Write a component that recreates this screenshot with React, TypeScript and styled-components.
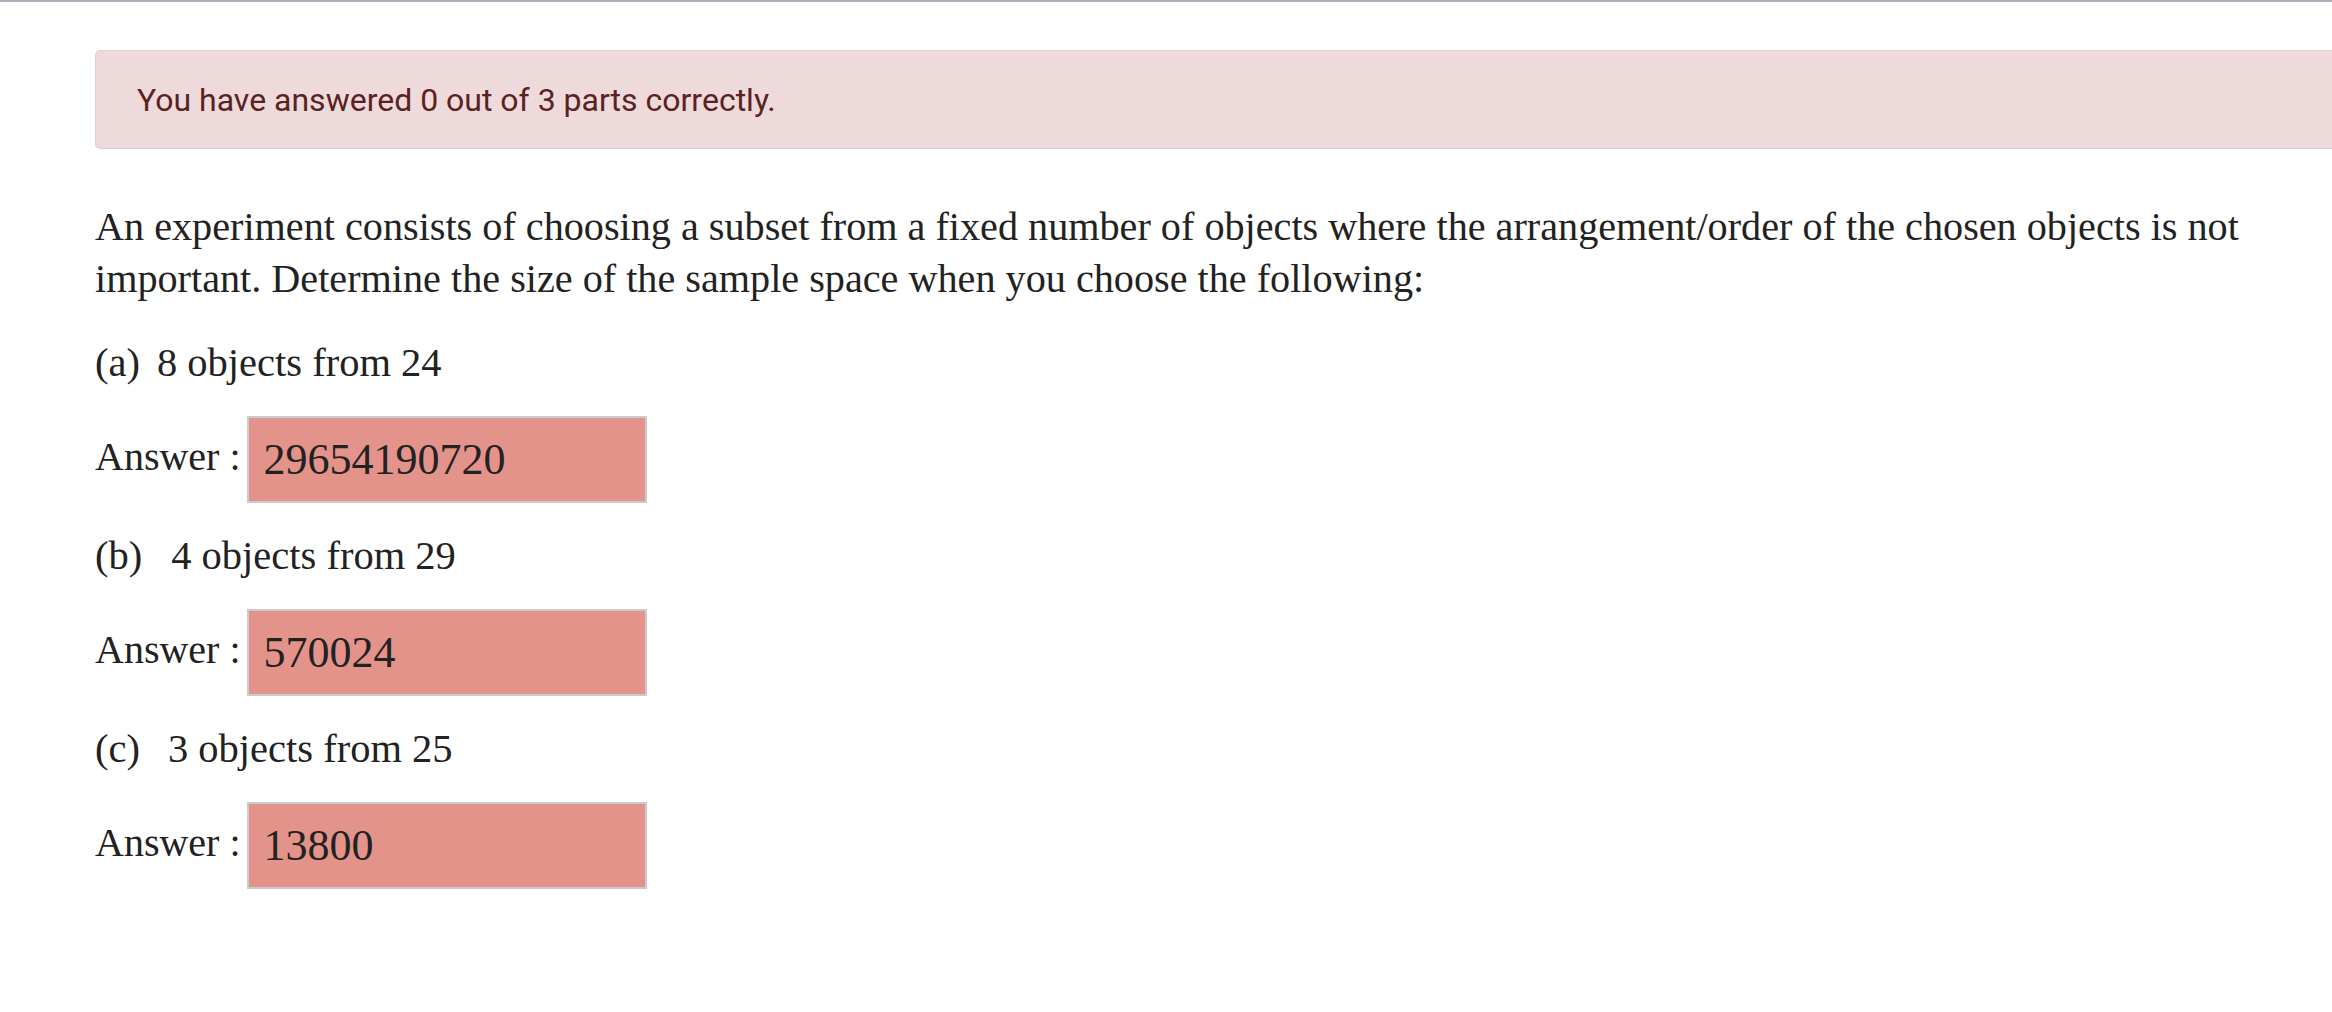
import React from "react";
import styled, { createGlobalStyle } from "styled-components";

const Global = createGlobalStyle`
  html, body {
    margin: 0;
    padding: 0;
    background: #ffffff;
    overflow: hidden;
  }
  body {
    font-family: "Liberation Serif", "Times New Roman", serif;
    color: #222222;
  }
`;

const Page = styled.div`
  width: 2332px;
  min-height: 1012px;
  border-top: 2px solid #aab0bc;
  box-sizing: border-box;
  overflow: hidden;
`;

const Content = styled.div`
  padding: 48px 0 0 95px;
  display: flex;
  flex-direction: column;
`;

const Alert = styled.div`
  width: 2400px;
  box-sizing: border-box;
  background: #eedada;
  border: 1px solid #e8cccc;
  border-bottom-color: #d2d4da;
  border-radius: 5px;
  padding: 31px 41px 30px;
  font-family: Roboto, "Liberation Sans", sans-serif;
  font-size: 32px;
  line-height: 36px;
  color: #5a2222;
`;

const Prose = styled.p`
  margin: 52px 0 32px;
  width: 2175px;
  font-size: 40.2px;
  line-height: 52px;
  color: #222222;
`;

const Parts = styled.div`
  display: flex;
  flex-direction: column;
  gap: 27px;
`;

const Question = styled.div`
  display: flex;
  align-items: baseline;
  font-size: 40.5px;
  line-height: 52px;
  color: #222222;
`;

const PartLabel = styled.span<{ $gap: number }>`
  margin-right: ${(p) => p.$gap}px;
`;

const AnswerRow = styled.div`
  display: flex;
  align-items: center;
  gap: 6px;
`;

const AnswerLabel = styled.span`
  font-size: 40px;
  line-height: 52px;
  color: #222222;
  margin-top: -6px;
`;

const AnswerBox = styled.div`
  width: 400px;
  height: 87px;
  box-sizing: border-box;
  background: #e4938b;
  border: 2px solid #cbcbcb;
  padding: 0 0 0 15px;
  display: flex;
  align-items: center;
  font-family: "Liberation Serif", "Times New Roman", serif;
  font-size: 44px;
  color: #222222;
`;

const parts = [
  { label: "(a)", gap: 17, text: "8 objects from 24", answer: "29654190720" },
  { label: "(b)", gap: 29, text: "4 objects from 29", answer: "570024" },
  { label: "(c)", gap: 28, text: "3 objects from 25", answer: "13800" },
];

export default function App() {
  return (
    <Page>
      <Global />
      <Content>
        <Alert>You have answered 0 out of 3 parts correctly.</Alert>
        <Prose>
          An experiment consists of choosing a subset from a fixed number of objects where the
          arrangement/order of the chosen objects is not important. Determine the size of the
          sample space when you choose the following:
        </Prose>
        <Parts>
          {parts.map((p) => (
            <React.Fragment key={p.label}>
              <Question>
                <PartLabel $gap={p.gap}>{p.label}</PartLabel>
                <span>{p.text}</span>
              </Question>
              <AnswerRow>
                <AnswerLabel>Answer :</AnswerLabel>
                <AnswerBox>{p.answer}</AnswerBox>
              </AnswerRow>
            </React.Fragment>
          ))}
        </Parts>
      </Content>
    </Page>
  );
}
